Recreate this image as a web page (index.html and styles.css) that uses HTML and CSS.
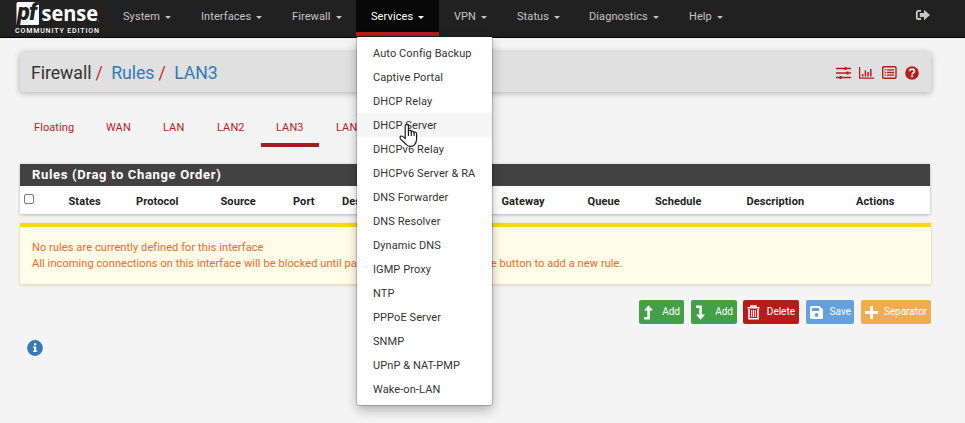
FILE: index.html
```html
<!DOCTYPE html>
<html lang="en">
<head>
<meta charset="utf-8">
<title>Firewall: Rules: LAN3</title>
<link rel="stylesheet" href="styles.css">
</head>
<body>
<nav class="navbar">
  <div class="brand">
    <svg class="logo" width="86" height="25" viewBox="0 0 86 25">
      <rect x="1.5" y="1" width="22.5" height="23" rx="1.5" fill="#fff"/>
      <text x="2.3" y="19" class="logo-pf">pf</text>
      <text x="26.5" y="20" class="logo-sense" textLength="56.5" lengthAdjust="spacingAndGlyphs">sense</text>
      <circle cx="83.5" cy="20" r=".5" fill="#aaa"/>
    </svg>
    <svg class="edition" width="86" height="9" viewBox="0 0 86 9"><text x="0" y="7.2" textLength="84" lengthAdjust="spacing">COMMUNITY EDITION</text></svg>
  </div>
  <ul class="menu">
    <li class="m-system">System<i class="caret"></i></li>
    <li class="m-interfaces">Interfaces<i class="caret"></i></li>
    <li class="m-firewall">Firewall<i class="caret"></i></li>
    <li class="m-services open">Services<i class="caret"></i>
      <ul class="dropdown">
        <li>Auto Config Backup</li>
        <li>Captive Portal</li>
        <li>DHCP Relay</li>
        <li class="hover">DHCP Server</li>
        <li>DHCPv6 Relay</li>
        <li>DHCPv6 Server &amp; RA</li>
        <li>DNS Forwarder</li>
        <li>DNS Resolver</li>
        <li>Dynamic DNS</li>
        <li>IGMP Proxy</li>
        <li>NTP</li>
        <li>PPPoE Server</li>
        <li>SNMP</li>
        <li>UPnP &amp; NAT-PMP</li>
        <li>Wake-on-LAN</li>
      </ul>
    </li>
    <li class="m-vpn">VPN<i class="caret"></i></li>
    <li class="m-status">Status<i class="caret"></i></li>
    <li class="m-diagnostics">Diagnostics<i class="caret"></i></li>
    <li class="m-help">Help<i class="caret"></i></li>
  </ul>
  <svg class="logout" width="16" height="13" viewBox="0 0 16 13">
    <path d="M6 1.8H3.4Q1.8 1.8 1.8 3.4V8.4Q1.8 10 3.4 10H6" fill="none" stroke="#c8c8c4" stroke-width="1.8"/>
    <path d="M4.8 4H9V.8L15 6 9 11.2V8H4.8Z" fill="#c8c8c4"/>
  </svg>
</nav>
<main>
  <header class="page-header">
    <h1><span>Firewall</span><b>/</b><a>Rules</a><b>/</b><a>LAN3</a></h1>
    <div class="tools">
      <svg width="15" height="12" viewBox="0 0 15 12"><path d="M0 1.5H15M0 6H15M0 10.5H15" stroke="#b71c1c" stroke-width="1.5"/><path d="M9.5 0V3M11.5 4.5V7.5M4.5 9V12" stroke="#b71c1c" stroke-width="2"/></svg>
      <svg width="15" height="12" viewBox="0 0 15 12"><path d="M.6 0V11.2H15" fill="none" stroke="#b71c1c" stroke-width="1.3"/><path d="M3.7 9.5V7M6.4 9.5V3.5M9.1 9.5V5M11.8 9.5V2" stroke="#b71c1c" stroke-width="1.5"/></svg>
      <svg width="15" height="13" viewBox="0 0 15 13"><rect x=".7" y=".7" width="13.3" height="11.6" rx="1" fill="none" stroke="#b71c1c" stroke-width="1.4"/><path d="M2.7 3.8H4M2.7 6.5H4M2.7 9.2H4M5 3.8H12M5 6.5H12M5 9.2H12" stroke="#b71c1c" stroke-width="1.3"/></svg>
      <svg width="14" height="14" viewBox="0 0 14 14"><circle cx="7" cy="7" r="6.8" fill="#b71c1c"/><path d="M4.7 5.3C4.7 2.3 9.4 2.3 9.4 5.2 9.4 6.7 7.2 6.7 7.1 8.4" fill="none" stroke="#eee" stroke-width="1.8"/><rect x="6.1" y="9.3" width="2" height="1.9" fill="#eee"/></svg>
    </div>
  </header>
  <ul class="tabs">
    <li class="t-floating">Floating</li><li class="t-wan">WAN</li><li class="t-lan">LAN</li><li class="t-lan2">LAN2</li><li class="t-lan3 active">LAN3</li><li class="t-lan4">LAN4</li>
  </ul>
  <section class="panel">
    <h2>Rules (Drag to Change Order)</h2>
    <div class="columns">
      <span class="check"></span><span>States</span><span>Protocol</span><span>Source</span><span>Port</span><span>Destination</span><span>Gateway</span><span>Queue</span><span>Schedule</span><span>Description</span><span>Actions</span>
    </div>
  </section>
  <div class="alert">
    <p>No rules are currently defined for this interface</p>
    <p>All incoming connections on this interface will be blocked until pass rules are added. Click the button to add a new rule.</p>
  </div>
  <div class="actions">
    <button class="add-top"><svg width="11" height="15" viewBox="0 0 11 15"><path d="M1 13.3H5.6V4" fill="none" stroke="#fff" stroke-width="2.6"/><path d="M1.2 5.5 5.6.2 10 5.5Z" fill="#fff"/></svg>Add</button>
    <button class="add-end"><svg width="11" height="15" viewBox="0 0 11 15"><path d="M1 1.7H5.6V11" fill="none" stroke="#fff" stroke-width="2.6"/><path d="M1.2 9.5 5.6 14.8 10 9.5Z" fill="#fff"/></svg>Add</button>
    <button class="delete"><svg width="13" height="15" viewBox="0 0 13 15"><path d="M.5 2.8H12.5M4 2.5V.9H9V2.5" fill="none" stroke="#fff" stroke-width="1.5"/><path d="M2 4V13.8H11V4" fill="none" stroke="#fff" stroke-width="1.6"/><path d="M4.7 5V12M6.5 5V12M8.3 5V12" stroke="#fff" stroke-width="1"/></svg>Delete</button>
    <button class="save"><svg width="13" height="13" viewBox="0 0 13 13"><path d="M1.5 0H9.5L13 3.5V11.5Q13 13 11.5 13H1.5Q0 13 0 11.5V1.5Q0 0 1.5 0ZM2 2V5H9V2ZM6.5 7A2 2 0 1 0 6.5 11 2 2 0 1 0 6.5 7Z" fill="#fff" fill-rule="evenodd"/></svg>Save</button>
    <button class="separator"><svg width="13" height="13" viewBox="0 0 13 13"><path d="M6.5 0V13M0 6.5H13" stroke="#fff" stroke-width="3"/></svg>Separator</button>
  </div>
  <svg class="info" width="16" height="16" viewBox="0 0 16 16"><circle cx="8" cy="8" r="7.9" fill="#337ab7"/><path d="M7 3.2H9.2V5.3H7ZM6.1 6.5H9.2V10.7H10.2V12.1H6V10.7H7V7.9H6.1Z" fill="#fff"/></svg>
</main>
<svg class="pointer" width="20" height="26" viewBox="0 0 20 26"><path d="M6.2 14.5V3.2Q6.2 1.3 7.8 1.3T9.4 3.2V8.5Q9.5 7.3 10.9 7.4T12.3 9Q12.5 8.1 13.7 8.2T15.1 9.8Q15.4 9 16.5 9.2T17.6 11V16.5Q17.3 20 15.3 22.2 14.3 23.4 11.6 23.4 8.6 23.4 7.2 21.5L1.4 15.8Q.4 13.8 2 13.1 3.3 12.7 6.2 15.6Z" fill="#fff" stroke="#111" stroke-width="1.15" stroke-linejoin="round"/><path d="M9.4 8V13M12.3 9V13M15.1 9.8V13" stroke="#111" stroke-width="1.1"/></svg>
</body>
</html>
```
FILE: styles.css
```css
* { box-sizing: border-box; }
body { margin: 0; height: 423px; overflow: hidden; background: #f4f4f4; color: #212121; font: 11px/16px Roboto, sans-serif; letter-spacing: .09px; }
ul { list-style: none; margin: 0; padding: 0; }
.navbar { display: flex; height: 38px; background: #212121; border-bottom: 1px solid #000; }
.brand { width: 108px; padding: 1px 0 0 15px; }
.logo, .edition { display: block; overflow: visible; }
.edition text { font: 500 7px Roboto, sans-serif; fill: #fff; }
.logo-pf { font: italic 900 23px Roboto, sans-serif; fill: #212121; letter-spacing: -.8px; }
.logo-sense { font: 700 22px "Open Sans", sans-serif; fill: #fff; letter-spacing: 0; }
.menu { display: flex; color: #c4c4c4; }
.menu > li { position: relative; height: 37px; padding: 9px 0 0 15px; white-space: nowrap; }
.m-system { width: 78px; }
.m-interfaces { width: 91px; }
.m-firewall { width: 79px; }
.m-services { width: 83px; }
.m-vpn { width: 63px; }
.m-status { width: 72px; }
.m-diagnostics { width: 100px; }
.menu > .open { height: 36px; background: #080808; border-bottom: 4px solid #b71c1c; color: #fff; }
.caret { display: inline-block; margin-left: 5px; vertical-align: 1px; border: 3px solid transparent; border-top-color: currentColor; border-bottom: 0; }
.dropdown { position: absolute; z-index: 5; top: 37px; left: 1px; width: 135px; height: 368px; padding-top: 4px; background: #fff; color: #333; border-radius: 0 0 2px 2px; box-shadow: 0 0 1px 1px rgba(0,0,0,.2), 0 5px 12px rgba(0,0,0,.28); }
.dropdown li { height: 24px; padding: 5px 0 0 16px; }
.dropdown .hover { background: #f5f5f5; }
.logout { margin: 9px 34px 0 auto; }
main { padding: 14px 34px 0 20px; }
.page-header { display: flex; align-items: center; justify-content: space-between; height: 40px; padding: 0 12px 0 11px; background: #e0e0e0; border-radius: 3px; box-shadow: 0 1px 6px rgba(0,0,0,.3); }
h1 { display: flex; margin: 2px 0 0; color: #333; font: 400 17.7px/24px Roboto, sans-serif; letter-spacing: -.05px; }
h1 b { margin: 0 8.5px 0 4px; font-weight: 400; color: #c62828; }
h1 a { color: #337ab7; }
.tools { display: flex; align-items: center; gap: 8px; margin-top: 1px; }
.tabs { display: flex; height: 55px; margin: 0 0 17px -1px; color: #b71c1c; }
.tabs li { padding: 28px 0 0 15px; }
.t-floating { width: 72px; }
.t-wan { width: 57px; }
.t-lan { width: 54px; }
.t-lan2 { width: 59px; }
.t-lan3 { width: 58px; }
.tabs .t-lan4 { padding-left: 17px; }
.tabs .active { border-bottom: 4px solid #a91d22; }
.panel { height: 50px; margin-right: 1px; background: #fff; box-shadow: 0 1px 3px rgba(0,0,0,.25); }
h2 { height: 22px; margin: 0; padding-left: 12px; background: #424242; color: #fff; font: 700 13px/22px Roboto, sans-serif; letter-spacing: .66px; }
.columns { display: grid; grid-template-columns: 48.5px 67.5px 84.5px 72.5px 49px 159.5px 86px 67.5px 91.5px 109.5px 1fr; padding-top: 8px; font-weight: 700; letter-spacing: .1px; }
.check { width: 10px; height: 10px; margin: 0 0 0 4px; border: 1px solid #767676; border-radius: 2px; }
.alert { height: 61px; margin-top: 9px; padding: 13px 12px 0; background: #fffde7; border-top: 4px solid #f5d71c; color: #f0682a; box-shadow: 0 1px 3px rgba(180,130,30,.35); white-space: nowrap; }
.alert p { margin: 0; }
.actions { display: flex; justify-content: flex-end; margin-top: 16px; }
.actions button { display: flex; align-items: center; justify-content: space-between; height: 24px; padding: 0 4px; border: 0; border-radius: 2px; color: #fff; font: 10px/16px Roboto, sans-serif; letter-spacing: 0; }
.actions .add-top { width: 45px; margin-right: 7px; background: #43a047; }
.actions .add-end { width: 46px; margin-right: 6px; background: #43a047; }
.actions .delete { width: 56px; margin-right: 7px; background: #b71c1c; }
.actions .save { width: 48px; margin-right: 7px; padding-right: 3px; background: #64a1dc; }
.actions .separator { width: 70px; background: #f0ad4e; }
.info { display: block; margin: 16px 0 0 7px; }
.pointer { position: absolute; z-index: 9; left: 399px; top: 123px; }
```
